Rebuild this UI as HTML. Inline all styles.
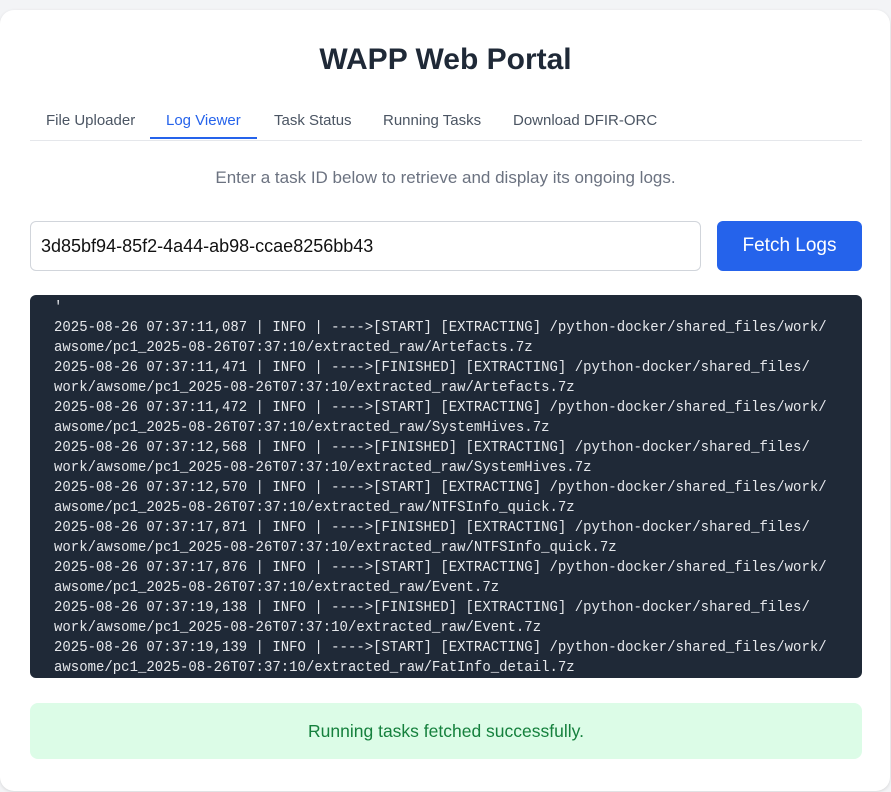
<!DOCTYPE html>
<html><head><meta charset="utf-8"><style>
*{box-sizing:border-box;margin:0;padding:0}
body{width:891px;height:792px;background:#f3f4f6;font-family:"Liberation Sans",sans-serif;overflow:hidden;position:relative}
.card{position:absolute;left:0;top:10px;width:890px;height:781px;background:#fff;border-radius:14px;box-shadow:0 1px 3px rgba(0,0,0,.12)}
h1{position:absolute;left:0;width:891px;top:43px;text-align:center;font-size:30px;font-weight:bold;color:#1f2937}
.tabs{position:absolute;left:30px;top:100px;width:832px;height:41px;border-bottom:1px solid #e5e7eb}
.tab{position:absolute;top:12px;font-size:15px;color:#4b5563}
.tab.on{color:#2563eb}
.ul{position:absolute;left:120px;top:37px;width:107px;height:2px;background:#2563eb}
.sub{position:absolute;top:168px;width:891px;text-align:center;font-size:17px;color:#6b7280}
.inp{position:absolute;left:30px;top:221px;width:671px;height:50px;border:1px solid #d1d5db;border-radius:6px;font-size:18px;color:#111;padding:14px 10px;line-height:20px}
.btn{position:absolute;left:717px;top:221px;width:145px;height:50px;background:#2563eb;border-radius:6px;color:#fff;font-size:19px;text-align:center;line-height:50px}
.log{position:absolute;left:30px;top:295px;width:832px;height:383px;background:#1f2937;border-radius:6px;overflow:hidden}
.log pre{position:absolute;left:24px;top:3px;font-family:"Liberation Mono",monospace;font-size:15px;line-height:20px;color:#e5e7eb;transform:scaleX(0.933);transform-origin:left top}
.ok{position:absolute;left:30px;top:703px;width:832px;height:56px;background:#dcfce7;border-radius:8px;color:#15803d;font-size:17.5px;text-align:center;line-height:56px}
</style></head><body>
<div class="card"></div>
<h1>WAPP Web Portal</h1>
<div class="tabs">
<span class="tab" style="left:16px">File Uploader</span>
<span class="tab on" style="left:136px">Log Viewer</span>
<span class="tab" style="left:244px">Task Status</span>
<span class="tab" style="left:353px">Running Tasks</span>
<span class="tab" style="left:483px">Download DFIR-ORC</span>
<div class="ul"></div>
</div>
<div class="sub">Enter a task ID below to retrieve and display its ongoing logs.</div>
<div class="inp">3d85bf94-85f2-4a44-ab98-ccae8256bb43</div>
<div class="btn">Fetch Logs</div>
<div class="log"><pre>'
2025-08-26 07:37:11,087 | INFO | ---->[START] [EXTRACTING] /python-docker/shared_files/work/
awsome/pc1_2025-08-26T07:37:10/extracted_raw/Artefacts.7z
2025-08-26 07:37:11,471 | INFO | ---->[FINISHED] [EXTRACTING] /python-docker/shared_files/
work/awsome/pc1_2025-08-26T07:37:10/extracted_raw/Artefacts.7z
2025-08-26 07:37:11,472 | INFO | ---->[START] [EXTRACTING] /python-docker/shared_files/work/
awsome/pc1_2025-08-26T07:37:10/extracted_raw/SystemHives.7z
2025-08-26 07:37:12,568 | INFO | ---->[FINISHED] [EXTRACTING] /python-docker/shared_files/
work/awsome/pc1_2025-08-26T07:37:10/extracted_raw/SystemHives.7z
2025-08-26 07:37:12,570 | INFO | ---->[START] [EXTRACTING] /python-docker/shared_files/work/
awsome/pc1_2025-08-26T07:37:10/extracted_raw/NTFSInfo_quick.7z
2025-08-26 07:37:17,871 | INFO | ---->[FINISHED] [EXTRACTING] /python-docker/shared_files/
work/awsome/pc1_2025-08-26T07:37:10/extracted_raw/NTFSInfo_quick.7z
2025-08-26 07:37:17,876 | INFO | ---->[START] [EXTRACTING] /python-docker/shared_files/work/
awsome/pc1_2025-08-26T07:37:10/extracted_raw/Event.7z
2025-08-26 07:37:19,138 | INFO | ---->[FINISHED] [EXTRACTING] /python-docker/shared_files/
work/awsome/pc1_2025-08-26T07:37:10/extracted_raw/Event.7z
2025-08-26 07:37:19,139 | INFO | ---->[START] [EXTRACTING] /python-docker/shared_files/work/
awsome/pc1_2025-08-26T07:37:10/extracted_raw/FatInfo_detail.7z</pre></div>
<div class="ok">Running tasks fetched successfully.</div>
</body></html>
